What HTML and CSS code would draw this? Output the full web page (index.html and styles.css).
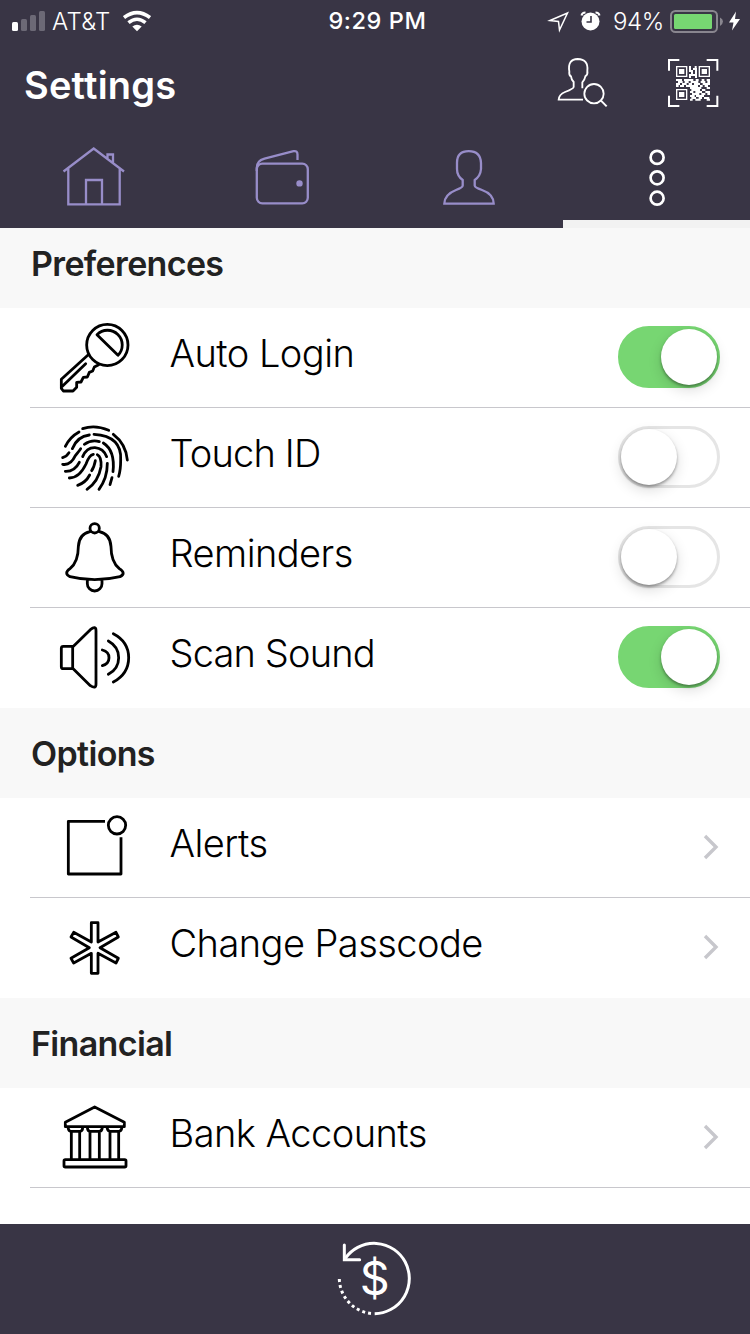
FILE: index.html
```html
<!DOCTYPE html>
<html lang="en">
<head>
<meta charset="utf-8">
<title>Settings</title>
<link rel="stylesheet" href="styles.css">
</head>
<body>
<div class="app">
  <header class="header">
    <div class="status">
      <div class="status-left">
        <svg class="signal" viewBox="12 0 33 40"><rect x="12" y="21" width="6" height="9" rx="1.5" fill="#fff"/><g fill="#6c6976"><rect x="21" y="18" width="6" height="12" rx="1.5"/><rect x="30" y="14" width="6" height="16" rx="1.5"/><rect x="39" y="10" width="6" height="20" rx="1.5"/></g></svg>
        <span class="carrier">AT&amp;T</span>
        <svg class="wifi" viewBox="123 0 28 40" fill="none" stroke="#fff" stroke-width="3.6"><path d="M124 16.6Q137 6.500 150 16.600"/><path d="M128.500 21.700Q137 14.800 145.500 21.700"/><path d="M132.300 25.600Q137 21.800 141.700 25.600L137 30.300Z" fill="#fff" stroke="none"/></svg>
      </div>
      <span class="time">9:29 PM</span>
      <div class="status-right">
        <svg class="status-icons" viewBox="546 0 58 40"><path d="M550 19.500L567.500 12L559.500 29L558.500 20.500Z" fill="none" stroke="#fff" stroke-width="1.500"/><circle cx="590.500" cy="20.500" r="9" fill="#fff"/><path d="M581.500 14.500Q582 11.500 585.500 11.500M599.500 14.500Q599 11.500 595.500 11.500" stroke="#fff" stroke-width="2" fill="none"/><path d="M591 15V21H586.500" stroke="#393545" stroke-width="1.600" fill="none"/></svg>
        <span class="percent">94%</span>
        <svg class="battery" viewBox="668 0 74 40"><rect x="671" y="10" width="46" height="21" rx="4.500" fill="none" stroke="#89868f" stroke-width="2"/><rect x="674" y="13" width="38" height="15" rx="1.500" fill="#77d672"/><path d="M720 16.500Q723 18 723 20.500T720 25Z" fill="#89868f"/><path d="M736 10.500L729 21.500H733.500L732 29.500L740 18H735Z" fill="#fff"/></svg>
      </div>
    </div>
    <div class="titlebar">
      <h1 class="title">Settings</h1>
      <svg class="find" viewBox="60 150 195 195" fill="none" stroke="#fff" stroke-width="5.5"><path d="M159 299H86Q87 283 105 276Q131 266 131 261V246Q124 239 123 229Q116 226 118 214Q112 178 143 177Q176 178 172 212Q174 224 166 229Q164 240 157 247V265"/><circle cx="192" cy="281" r="29"/><path d="M213 302L230 319" stroke-width="6"/></svg>
      <svg class="qr" viewBox="405 150 165 195"><path d="M417 212V180H448M530 180H562V212M417 287V318H448M530 318H562V287" fill="none" stroke="#fff" stroke-width="6"/><path d="M440 200H470V229H440ZM508 200H538V229H508ZM440 269H470V298H440Z" fill="none" stroke="#fff" stroke-width="4"/><path d="M447 207h16v15h-16zM515 207h16v15h-16zM447 276h16v15h-16z" fill="#fff"/><path d="M477 201h6M494 201h6M477 207h6M489 207h12M477 213h12M495 213h6M483 219h6M495 219h6M477 225h24M477 231h6M495 231h6M438 240h18M462 240h28M497 240h9M515 240h8M530 240h10M444 246h14M464 246h12M482 246h23M512 246h14M532 246h8M438 252h12M456 252h14M476 252h10M492 252h18M518 252h22M438 258h8M450 258h12M468 258h36M510 258h8M524 258h10M480 264h16M490 264h24M530 264h10M484 270h26M516 270h10M480 276h10M496 276h20M526 276h14M486 282h22M514 282h12M532 282h8M480 288h14M498 288h24M484 294h14M506 294h10M522 294h16M480 299h8M496 299h16M530 299h10" fill="none" stroke="#fff" stroke-width="6"/></svg>
    </div>
    <nav class="tabs">
      <a class="tab"><svg viewBox="0 130 187.5 98"><path d="M63.500 171.500L93.700 148.500L124 171.500M68.300 168V204.300H119.700V168M86 204V180H102V204M107.500 158.500V154.500H113V163"/></svg></a>
      <a class="tab"><svg viewBox="187.5 130 187.5 98"><rect x="256.300" y="163.700" width="51" height="39.600" rx="5.500"/><path d="M256.300 171V168Q256 161 264 158.700L293 151.200Q297 150.500 297 154.500V160"/><circle cx="299" cy="183.400" r="3.200" fill="#988dc9" stroke="none"/></svg></a>
      <a class="tab"><svg viewBox="375 130 187.5 98"><path d="M444.300 203.700H493.700Q493.500 194 482 190Q474.700 187.500 474.700 185.500V180Q480.500 176 481 169V163Q480.500 151.200 468.700 151.200T457 163V169Q457 176 462.700 180V185.500Q462.700 187.500 456 190Q444.500 194.500 444.300 203.700Z"/></svg></a>
      <a class="tab active"><svg viewBox="562.5 130 187.5 98"><circle cx="656.600" cy="157.400" r="6.500"/><circle cx="656.600" cy="177.800" r="6.500"/><circle cx="656.600" cy="198.200" r="6.500"/></svg></a>
    </nav>
  </header>
  <main class="content">
    <h2 class="section first">Preferences</h2>
    <div class="row"><svg class="icon" viewBox="30 -6 270 297"><circle cx="202" cy="105" r="62"/><path d="M171 74A44 44 0 1 1 234 136ZM144 135L64 208V235L70 243H99L110 232V217L123 216L130 202L142 201L148 187L158 183L163 171L176 164M137 161L64 232"/></svg><span class="label">Auto Login</span><span class="switch on"><i class="knob"></i></span></div>
    <div class="row"><svg class="icon" viewBox="30 294 270 297"><path d="M128 356Q165 343 206 361M76 409Q90 381 117 366M220 373Q258 402 262 450M97 416Q112 379 148 375M162 373Q246 378 242 450Q242 480 236 499M68 443Q80 440 87 428M68 463Q92 467 106 437Q118 422 122 416M133 403Q155 388 178 395M190 399Q226 422 219 485M76 484Q104 485 118 457M88 504Q118 504 138 462Q147 436 160 433M128 440Q140 412 165 413Q190 415 200 440M113 526Q137 518 149 495M141 538Q175 515 183 470Q185 440 172 434M166 452Q162 472 155 482M202 460Q202 505 177 538M216 503L210 524"/></svg><span class="label tight">Touch ID</span><span class="switch"><i class="knob"></i></span></div>
    <div class="row"><svg class="icon" viewBox="30 -6 270 297"><circle cx="164" cy="55" r="14"/><path d="M150 65Q117 72 115 110Q115 155 90 176Q70 190 90 200Q125 209 164 209T240 200Q260 190 238 176Q213 155 213 110Q211 72 178 65M142 212V221A22 22 0 0 0 186 221V212"/></svg><span class="label">Reminders</span><span class="switch"><i class="knob"></i></span></div>
    <div class="row last"><svg class="icon" viewBox="30 294 270 297"><path d="M98 409H70Q64 409 64 415V470Q64 476 70 476H98ZM98 411L151 359Q168 346 168 362V522Q168 538 151 527L98 475M187 420Q207 425 207 443T187 467M205 393Q236 410 236 443T205 493M220 371Q266 395 266 443T220 516"/></svg><span class="label tight">Scan Sound</span><span class="switch on"><i class="knob"></i></span></div>
    <h2 class="section">Options</h2>
    <div class="row"><svg class="icon" viewBox="30 -6 270 297"><path d="M195 64H85V222H243V112" stroke-linecap="butt"/><circle cx="231" cy="76" r="26"/></svg><span class="label">Alerts</span><svg class="chevron" viewBox="0 0 16 28"><path d="M2 3L13 14L2 25"/></svg></div>
    <div class="row last"><svg class="icon" viewBox="30 294 270 297"><path d="M154 368H174V426L228 397L235 411L180 443L235 475L228 489L174 460V520H154V460L101 489L93 475L148 443L93 411L101 397L154 426Z"/></svg><span class="label">Change Passcode</span><svg class="chevron" viewBox="0 0 16 28"><path d="M2 3L13 14L2 25"/></svg></div>
    <h2 class="section">Financial</h2>
    <div class="row"><svg class="icon" viewBox="90 204 270 297"><path d="M136 320V307L224 261L313 307V320ZM144 322Q146 334 152 334H180Q188 334 188 322M202 322Q203 334 210 334H238Q246 334 247 322M261 322Q263 334 270 334H297Q304 334 306 322M154 335V418M179 335V418M210 335V418M238 335V418M270 335V418M296 335V418"/><rect x="132" y="419" width="186" height="22" rx="4"/></svg><span class="label">Bank Accounts</span><svg class="chevron" viewBox="0 0 16 28"><path d="M2 3L13 14L2 25"/></svg></div>
  </main>
  <footer class="footer">
    <svg class="refund" viewBox="0 27 360 330"><g fill="none" stroke="#fff" stroke-width="9"><path d="M76 130A105.500 105.500 0 1 1 164 296"/><path d="M73 90V134H119" stroke-linecap="round"/><path d="M153 295.500A107 107 0 0 1 58 186" stroke-dasharray="9 9"/></g><text class="dollar" x="164" y="240" text-anchor="middle">$</text></svg>
  </footer>
</div>
</body>
</html>
```
FILE: styles.css
```css
* { box-sizing: border-box; }
body { margin: 0; font-family: Inter, "Liberation Sans", sans-serif; }
.app { width: 750px; height: 1334px; display: flex; flex-direction: column; background: #fff; overflow: hidden; }
.header { height: 228px; background: #393545; color: #fff; }
.status { height: 40px; display: grid; grid-template-columns: 1fr 120px 1fr; align-items: center; font-size: 24px; line-height: 42px; }
.status-left { display: flex; height: 40px; padding-left: 12px; }
.status-right { display: flex; height: 40px; justify-content: flex-end; padding-right: 8px; }
.status svg { height: 40px; display: block; }
.signal { width: 33px; }
.carrier { width: 71px; margin-left: 7px; font-weight: 300; letter-spacing: 0.3px; white-space: nowrap; }
.wifi { width: 28px; }
.time { text-align: center; font-weight: 500; font-size: 23.5px; letter-spacing: 0.6px; padding-left: 5px; white-space: nowrap; }
.status-icons { width: 58px; }
.percent { width: 55px; margin-left: 9px; font-weight: 300; font-size: 24px; letter-spacing: -0.4px; }
.battery { width: 74px; }
.titlebar { height: 90px; display: flex; padding: 10px 30px 0 24px; }
.title { margin: 0; flex: 1; font-size: 38px; line-height: 70px; font-weight: 600; letter-spacing: 0.2px; }
.find { width: 65px; height: 65px; }
.qr { width: 55px; height: 65px; margin-left: 50px; }
.tabs { height: 98px; display: flex; }
.tab { flex: 1; height: 98px; }
.tab svg { display: block; width: 100%; height: 98px; fill: none; stroke: #988dc9; stroke-width: 2.3; }
.tab.active { border-bottom: 8px solid #f2f2f2; }
.tab.active svg { stroke: #fff; stroke-width: 2.7; }
.content { height: 996px; }
.section { margin: 0; height: 90px; padding-left: 31px; background: #f8f8f8; color: #222; font-size: 34px; line-height: 91px; font-weight: 600; letter-spacing: -0.65px; }
.section.first { height: 80px; line-height: 71px; }
.row { height: 100px; margin-left: 30px; padding: 0 30px 0 20px; display: flex; align-items: center; border-bottom: 1px solid #c8c7cc; }
.row.last { border-bottom-color: transparent; }
.icon { width: 90px; height: 99px; fill: none; stroke: #000; stroke-width: 8.4; stroke-linejoin: round; stroke-linecap: round; }
.label { flex: 1; margin-left: 29.5px; padding-bottom: 9px; font-size: 38px; font-weight: 300; line-height: 50px; letter-spacing: -0.55px; color: #000; white-space: nowrap; }
.label.tight { letter-spacing: -0.85px; }
.switch { width: 102px; height: 62px; margin-bottom: 1px; border: 3px solid #e5e5e5; border-radius: 31px; display: flex; }
.switch.on { background: #77d672; border-color: #77d672; justify-content: flex-end; }
.knob { width: 56px; height: 56px; border-radius: 50%; background: #fff; box-shadow: 0 2px 3px rgba(0,0,0,.35), 0 5px 14px rgba(0,0,0,.14); }
.chevron { width: 16px; height: 28px; margin-right: 1px; margin-bottom: 2px; fill: none; stroke: #c7c7cc; stroke-width: 3.4; }
.footer { height: 110px; background: #393545; padding-left: 320px; }
.refund { display: block; width: 120px; height: 110px; }
.dollar { font-size: 140px; font-weight: 400; fill: #fff; }
```
